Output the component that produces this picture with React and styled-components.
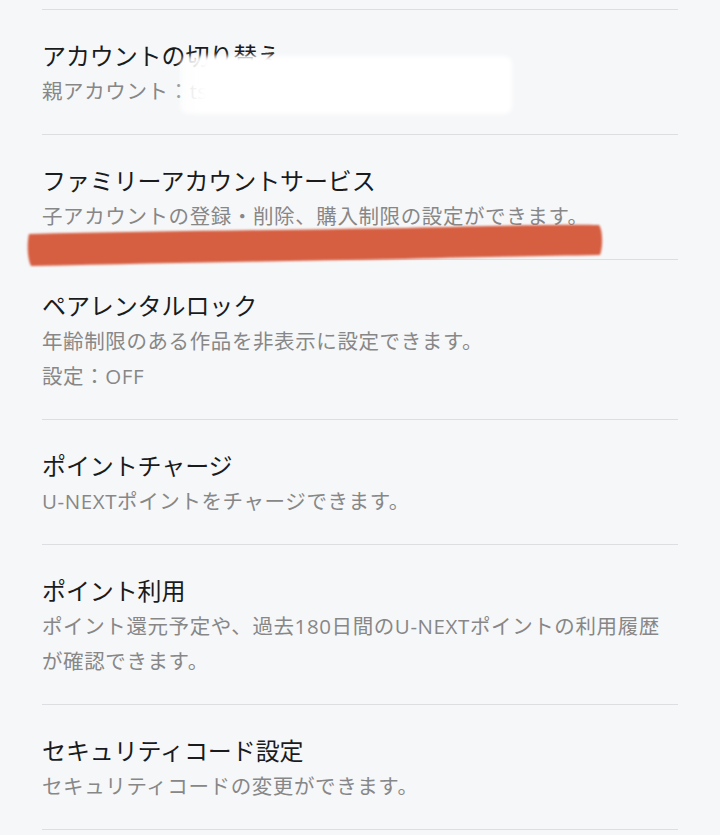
import React from 'react'
import styled, { createGlobalStyle } from 'styled-components'

const GlobalStyle = createGlobalStyle`
  html, body {
    margin: 0;
    padding: 0;
    background: #f6f7f9;
  }
  body {
    font-family: "Noto Sans CJK JP", "Noto Sans", sans-serif;
    -webkit-font-smoothing: antialiased;
  }
`

const items = [
  { title: 'アカウントの切り替え', lines: ['親アカウント：ts'] },
  {
    title: 'ファミリーアカウントサービス',
    lines: ['子アカウントの登録・削除、購入制限の設定ができます。'],
  },
  {
    title: 'ペアレンタルロック',
    lines: ['年齢制限のある作品を非表示に設定できます。', '設定：OFF'],
  },
  { title: 'ポイントチャージ', lines: ['U-NEXTポイントをチャージできます。'] },
  {
    title: 'ポイント利用',
    lines: [
      'ポイント還元予定や、過去180日間のU-NEXTポイントの利用履歴が確認できます。',
    ],
  },
  {
    title: 'セキュリティコード設定',
    lines: ['セキュリティコードの変更ができます。'],
  },
]

export default function App() {
  return (
    <Page>
      <GlobalStyle />
      <List>
        {items.map((item) => (
          <Item key={item.title}>
            <Title>{item.title}</Title>
            {item.lines.map((line) => (
              <Description key={line}>{line}</Description>
            ))}
          </Item>
        ))}
      </List>

      {/* privacy patch over the account name */}
      <WhitePatch />

      {/* marker stroke over the hidden line */}
      <Marker width="584" height="52" viewBox="0 0 584 52">
        <defs>
          <filter id="soft" x="-5%" y="-30%" width="110%" height="160%">
            <feGaussianBlur stdDeviation="1.3" />
          </filter>
        </defs>
        <path
          d="M4 16 C120 13 260 12 380 10 C470 8 540 6 574 7 C578 12 578 30 575 37
             C520 38 460 39 380 41 C260 43 140 45 6 48 C2 40 2 24 4 16 Z"
          fill="#d65f42"
          filter="url(#soft)"
        />
      </Marker>
    </Page>
  )
}

const Page = styled.div`
  position: relative;
  min-height: 835px;
  background: #f6f7f9;
  overflow: hidden;
`

const List = styled.div`
  margin: 9px 42px 0;
  border-top: 1px solid #dcdee1;
`

const Item = styled.div`
  display: flex;
  flex-direction: column;
  padding: 29px 0 25px;
  border-bottom: 1px solid #dcdee1;
`

const Title = styled.div`
  font-size: 24px;
  line-height: 32px;
  letter-spacing: -0.1px;
  color: #1a1b1d;
  margin-bottom: 3px;
`

const Description = styled.div`
  font-family: "Open Sans", "Noto Sans CJK JP", sans-serif;
  font-size: 20.5px;
  line-height: 35px;
  letter-spacing: 0.6px;
  color: #878787;
  max-width: 625px;
`

const WhitePatch = styled.div`
  position: absolute;
  left: 180px;
  top: 56px;
  width: 332px;
  height: 58px;
  background: linear-gradient(
    90deg,
    rgba(255, 255, 255, 0.75) 0px,
    #ffffff 26px
  );
  border-radius: 8px;
  filter: blur(2px);
`

const Marker = styled.svg`
  position: absolute;
  left: 25px;
  top: 218px;
`
